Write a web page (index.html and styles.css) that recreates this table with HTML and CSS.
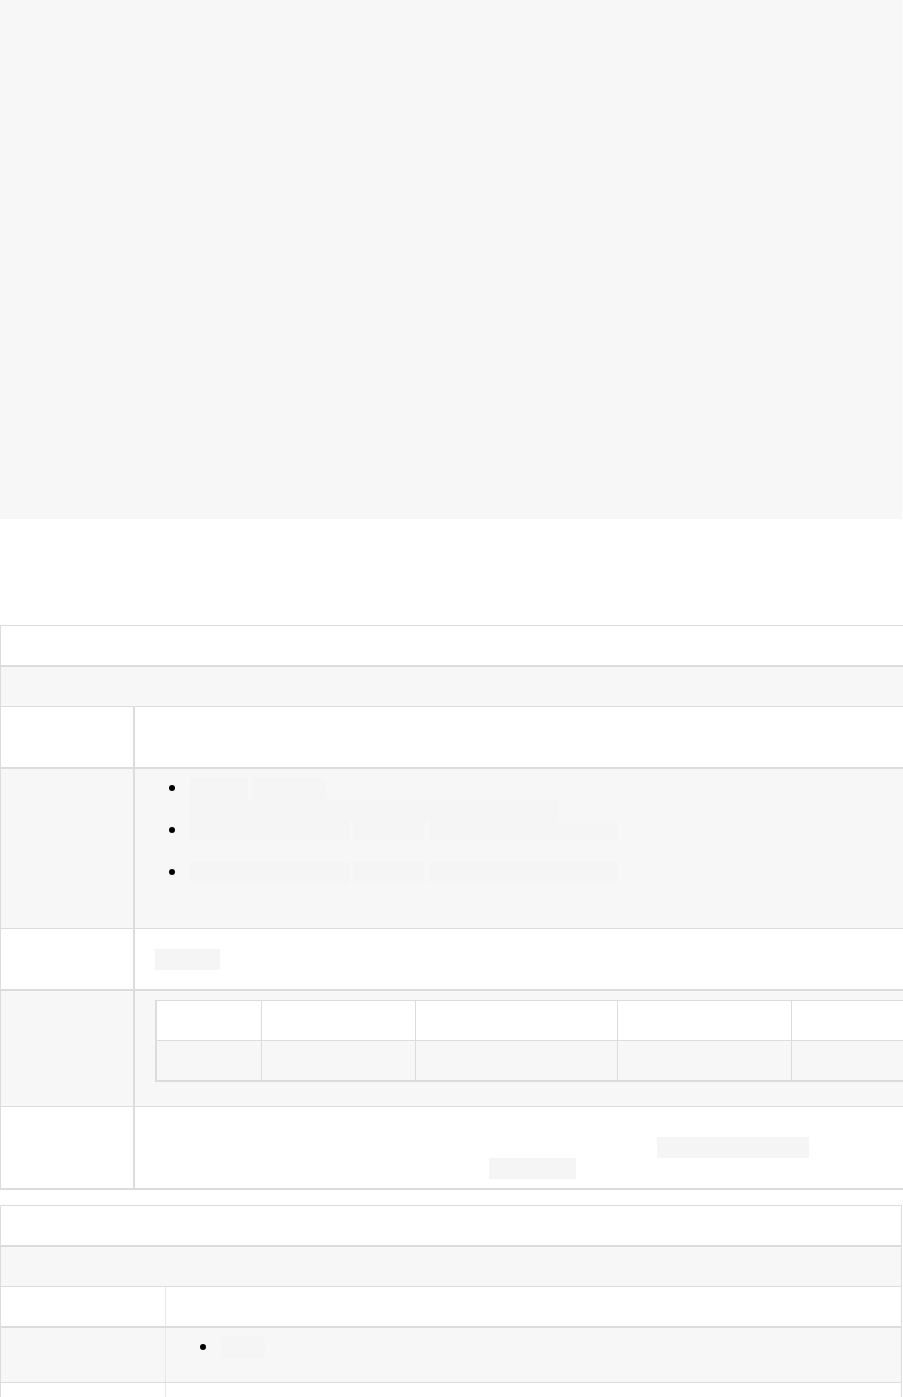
FILE: index.html
```html
<!DOCTYPE html>
<html lang="en">
<head>
  <meta charset="UTF-8" />
  <meta name="viewport" content="width=device-width, initial-scale=1.0"/>
  <title>Component reference</title>
  <link rel="stylesheet" href="styles.css">
</head>
<body>
  <div id="page">
    <div class="hero">
      <h1>Component reference</h1>
      <p>Options, values and examples for every public property of the widget.</p>
    </div>

    <h2 class="sectionTitle">Properties</h2>

    <div class="tableWrap">
      <table class="spec specWide">
        <colgroup>
          <col class="labelCol">
          <col>
        </colgroup>
        <tr class="thick">
          <th colspan="2">layout</th>
        </tr>
        <tr class="shade">
          <td colspan="2">Controls how child items are arranged inside the container.</td>
        </tr>
        <tr class="thick">
          <td class="label">Supported platforms</td>
          <td>Web, desktop and mobile builds starting from release four.</td>
        </tr>
        <tr class="shade">
          <td class="label">Values</td>
          <td>
            <ul class="bullets">
              <li><code>stacked</code> <code>grid-auto</code> keep the items in source order<br><code>layout="stacked" gap="8" align="start" wrap="true"</code></li>
              <li><code>horizontal-overflowed</code> <code>scrollbar</code> <code>overflow-direction="left"</code><br>items overflow to the side and can be scrolled</li>
              <li><code>vertical-scrolled-top</code> <code>overlayed</code> <code>overflow-direction="down"</code><br>items overflow downwards and can be scrolled</li>
            </ul>
          </td>
        </tr>
        <tr class="thick">
          <td class="label">Default behaviour</td>
          <td><code>vertical</code></td>
        </tr>
        <tr class="shade">
          <td class="label">Example</td>
          <td>
            <table class="inner">
              <colgroup>
                <col class="c1">
                <col class="c2">
                <col class="c3">
                <col class="c4">
                <col class="c5">
              </colgroup>
              <tr>
                <td>Name</td>
                <td>Layout</td>
                <td>Gap</td>
                <td>Align</td>
                <td>Wrap</td>
              </tr>
              <tr class="shade">
                <td>Cards</td>
                <td>grid-auto</td>
                <td>16</td>
                <td>center</td>
                <td>yes</td>
              </tr>
            </table>
          </td>
        </tr>
        <tr class="thick">
          <td class="label">Notes</td>
          <td>Changing the layout at runtime triggers a full measure pass of every child item.<br>Prefer setting it once when the component first mounts, and after that listen to all <code>layout-change-events</code><br>to react to any further updates from the parent, or call <code>forceLayout</code> by hand.</td>
        </tr>
      </table>
    </div>

    <table class="spec specNarrow">
      <colgroup>
        <col class="labelCol">
        <col>
      </colgroup>
      <tr class="thick">
        <th colspan="2">theme</th>
      </tr>
      <tr class="shade">
        <td colspan="2">Selects the colour palette used by the component.</td>
      </tr>
      <tr class="thick">
        <td class="label">Type</td>
        <td>String</td>
      </tr>
      <tr class="shade">
        <td class="label">Values</td>
        <td>
          <ul class="bullets">
            <li><code>night</code></li>
          </ul>
        </td>
      </tr>
      <tr class="lastRow">
        <td class="label"></td>
        <td></td>
      </tr>
    </table>
  </div>
</body>
</html>
```

FILE: styles.css
```css
* {
  box-sizing: border-box;
}
body {
  margin: 0;
  background: white;
  color: transparent;
  font-family: 'Liberation Sans', Arial, sans-serif;
  font-size: 14px;
  line-height: 21px;
}
#page {
  width: 902px;
}
.hero {
  height: 519px;
  padding: 40px;
  background: #f7f7f7;
}
.hero h1 {
  margin: 0 0 16px;
  font-size: 32px;
  line-height: 40px;
}
.hero p {
  margin: 0;
}
.sectionTitle {
  margin: 32px 0;
  font-size: 24px;
  line-height: 42px;
}
.tableWrap {
  width: 903px;
  overflow: hidden;
}
.spec {
  border-collapse: collapse;
  table-layout: fixed;
  border: 1px solid #dcdcdc;
}
.specWide {
  width: 950px;
}
.specWide .labelCol {
  width: 133px;
}
.specNarrow {
  width: 902px;
  margin-top: 15px;
}
.specNarrow .labelCol {
  width: 165px;
}
.spec th,
.spec td {
  padding: 9px 20px;
  border: 1px solid #dcdcdc;
  text-align: left;
  vertical-align: middle;
  font-weight: normal;
}
.spec .thick > th,
.spec .thick > td {
  border-bottom-width: 2px;
}
.spec .shade > td {
  background: #f7f7f7;
}
.spec .lastRow > td {
  height: 40px;
}
.specWide .label {
  border-right-width: 2px;
}
.specNarrow .label {
  border-right-color: #e8e8e8;
}
code {
  display: inline-block;
  vertical-align: top;
  padding: 0 4px;
  background: #f5f5f5;
  font-family: 'Liberation Mono', 'Courier New', monospace;
  font-size: 12px;
  line-height: 21px;
}
.bullets {
  margin: 0 0 15px;
  padding-left: 35px;
  list-style: none;
}
.bullets li::before {
  content: "";
  display: inline-block;
  vertical-align: top;
  width: 6px;
  height: 6px;
  margin: 7px 15px 0 -21px;
  border-radius: 50%;
  background: black;
}
.inner {
  border-collapse: collapse;
  table-layout: fixed;
  width: 776px;
  margin-bottom: 15px;
  border-left: 2px solid #dcdcdc;
  border-bottom: 2px solid #dcdcdc;
}
.inner td {
  padding: 9px 12px;
  border: 1px solid #dcdcdc;
  background: white;
}
.inner .shade > td {
  background: #f7f7f7;
}
.inner .c1 { width: 106px; }
.inner .c2 { width: 154px; }
.inner .c3 { width: 202px; }
.inner .c4 { width: 174px; }
.inner .c5 { width: 140px; }
```
